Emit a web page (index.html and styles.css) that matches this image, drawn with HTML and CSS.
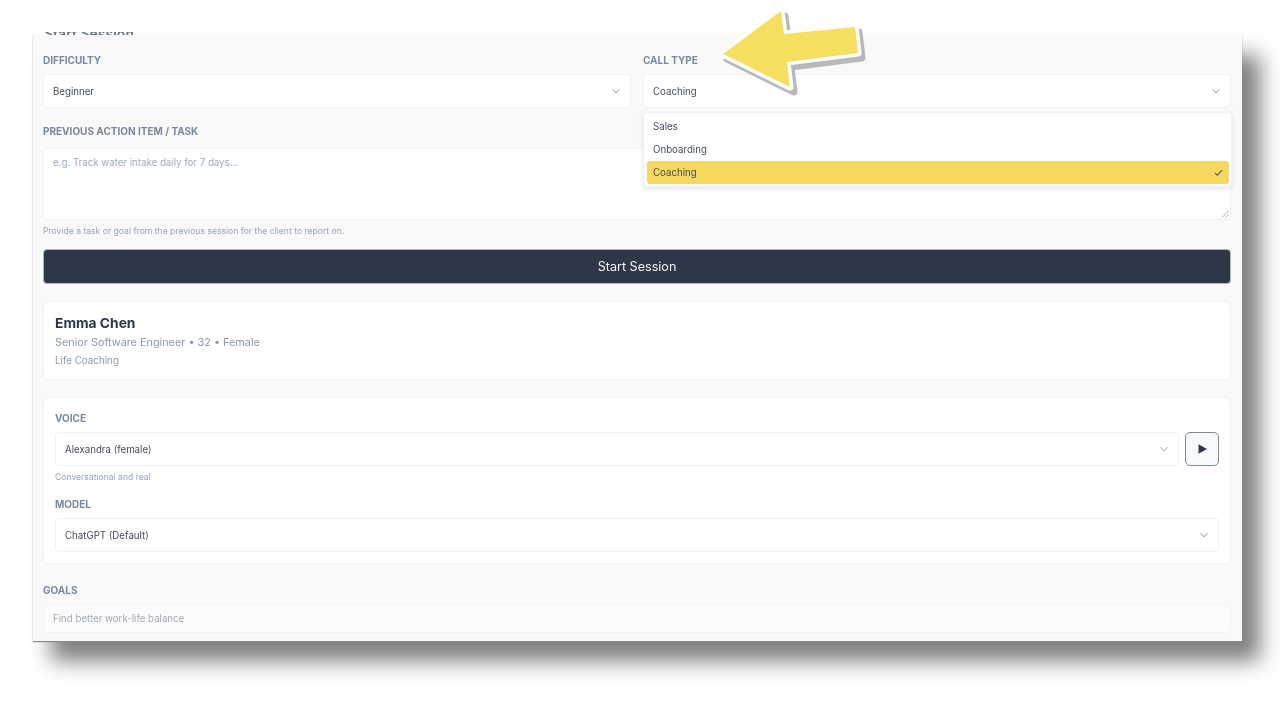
FILE: index.html
```html
<!DOCTYPE html>
<html lang="en">

<head>
    <meta charset="UTF-8">
    <meta name="viewport" content="width=device-width, initial-scale=1.0">
    <title>Start Session</title>
    <link rel="stylesheet" href="styles.css">
</head>

<body>
    <div class="shot">
        <div class="title-strip">
            <h2>Start Session</h2>
        </div>

        <div class="panel">
            <div class="row-two">
                <div class="field">
                    <div class="label">DIFFICULTY</div>
                    <div class="select">
                        <span>Beginner</span>
                        <svg class="chevron" viewBox="0 0 16 16"><path d="M4 6l4 4 4-4"/></svg>
                    </div>
                </div>
                <div class="field call-type">
                    <div class="label">CALL TYPE</div>
                    <div class="select">
                        <span>Coaching</span>
                        <svg class="chevron" viewBox="0 0 16 16"><path d="M4 6l4 4 4-4"/></svg>
                    </div>
                    <!-- open dropdown sits over the textarea -->
                    <div class="menu">
                        <div class="menu-item">Sales</div>
                        <div class="menu-item">Onboarding</div>
                        <div class="menu-item active">
                            <span>Coaching</span>
                            <svg class="check" viewBox="0 0 16 16"><path d="M3.5 8.5l3 3 6-6.5"/></svg>
                        </div>
                    </div>
                </div>
            </div>

            <div class="label task-label">PREVIOUS ACTION ITEM / TASK</div>
            <div class="textarea">
                <span>e.g. Track water intake daily for 7 days...</span>
                <svg class="resize" viewBox="0 0 8 8"><path d="M1 7.5L7.5 1M4.5 7.5L7.5 4.5"/></svg>
            </div>
            <div class="hint task-hint">Provide a task or goal from the previous session for the client to report on.</div>

            <button class="start-btn">Start Session</button>

            <div class="card client">
                <div class="client-name">Emma Chen</div>
                <div class="client-meta">Senior Software Engineer • 32 • Female</div>
                <div class="client-type">Life Coaching</div>
            </div>

            <div class="card voice">
                <div class="label">VOICE</div>
                <div class="voice-row">
                    <div class="select">
                        <span>Alexandra (female)</span>
                        <svg class="chevron" viewBox="0 0 16 16"><path d="M4 6l4 4 4-4"/></svg>
                    </div>
                    <button class="play-btn">
                        <svg viewBox="0 0 12 12"><path d="M2.5 1.2L11 6l-8.5 4.8z"/></svg>
                    </button>
                </div>
                <div class="hint voice-hint">Conversational and real</div>
                <div class="label model-label">MODEL</div>
                <div class="select">
                    <span>ChatGPT (Default)</span>
                    <svg class="chevron" viewBox="0 0 16 16"><path d="M4 6l4 4 4-4"/></svg>
                </div>
            </div>

            <div class="label goals-label">GOALS</div>
            <div class="goals-input">Find better work-life balance</div>
        </div>
    </div>

    <!-- annotation arrow drawn on top of the screenshot -->
    <svg class="arrow" viewBox="0 0 160 100">
        <path class="arrow-shadow" d="M64 6L67 29L138 22L141 48L70 57L73 82L6 49z"/>
        <path class="arrow-edge" d="M60 1L63 24L134 17L137 43L66 52L69 77L2 44z"/>
        <path class="arrow-fill" d="M60 1L63 24L134 17L137 43L66 52L69 77L2 44z"/>
    </svg>
</body>

</html>
```

FILE: styles.css
```css
* {
    margin: 0;
    padding: 0;
    box-sizing: border-box;
}

body {
    font-family: Inter, 'Liberation Sans', sans-serif;
    background: white;
    color: #2d3748;
    height: 720px;
    overflow: hidden;
}

/* the source is a soft, scaled-up capture */
.shot {
    width: 1209px;
    margin: 32px 0 0 33px;
    filter: blur(0.4px);
}

.title-strip {
    height: 3px;
    padding-left: 11px;
    overflow: hidden;
}

.title-strip h2 {
    font-size: 14px;
    line-height: 12px;
    font-weight: 600;
    margin-top: -4px;
    color: #6b7482;
}

.panel {
    height: 606px;
    padding: 19px 11px 0 10px;
    background: #f9f9f9;
    overflow: hidden;
    box-shadow: 0 1px 1px #888, 18px 20px 20px rgba(0, 0, 0, 0.5);
}

.row-two {
    display: grid;
    grid-template-columns: 1fr 1fr;
    gap: 12px;
}

.field {
    position: relative;
}

.label {
    font-size: 10px;
    line-height: 12px;
    font-weight: 700;
    color: #7a889e;
    margin-bottom: 8px;
}

.select {
    height: 34px;
    flex: 1;
    display: flex;
    align-items: center;
    justify-content: space-between;
    padding: 0 7px 0 9px;
    background: white;
    border: 1px solid #edf2f7;
    border-radius: 4px;
    font-size: 9.7px;
    color: #454c59;
}

.chevron {
    width: 14px;
    height: 14px;
    fill: none;
    stroke: #a0a8b4;
    stroke-width: 1.2;
}

.menu {
    position: absolute;
    top: 58px;
    left: 0;
    right: -1px;
    height: 75px;
    padding: 2px 2px 0 3px;
    background: white;
    border: 1px solid #edf2f7;
    border-radius: 4px;
    box-shadow: 0 2px 5px rgba(0, 0, 0, 0.1);
    z-index: 2;
}

.menu-item {
    height: 23px;
    display: flex;
    align-items: center;
    justify-content: space-between;
    padding: 0 4px 0 6px;
    font-size: 9.7px;
    color: #454c59;
    border-radius: 3px;
}

.menu-item.active {
    background: #f6d860;
}

.check {
    width: 13px;
    height: 13px;
    fill: none;
    stroke: #4a5568;
    stroke-width: 1.3;
}

.task-label {
    margin-top: 17px;
    margin-bottom: 11px;
}

.textarea {
    position: relative;
    height: 72px;
    padding: 8px 9px;
    background: white;
    border: 1px solid #edf2f7;
    border-radius: 4px;
    font-size: 9.7px;
    line-height: 12px;
    color: #a0aec0;
}

.resize {
    position: absolute;
    right: 1px;
    bottom: 1px;
    width: 8px;
    height: 8px;
    fill: none;
    stroke: #999;
    stroke-width: 0.8;
}

.hint {
    font-size: 8.6px;
    line-height: 11px;
    color: #98a4b6;
}

.task-hint {
    margin-top: 6px;
}

.start-btn {
    display: block;
    width: 100%;
    height: 35px;
    margin-top: 12px;
    background: #2d3748;
    color: #f1f3f6;
    border: 1px solid #b4b8c0;
    border-radius: 4px;
    font-family: inherit;
    font-size: 12.6px;
}

.card {
    background: white;
    border: 1px solid #edf2f7;
    border-radius: 5px;
    padding: 0 11px;
}

.client {
    height: 79px;
    margin-top: 17px;
    padding-top: 13px;
}

.client-name {
    font-size: 13.8px;
    line-height: 17px;
    font-weight: 700;
    color: #2d3748;
}

.client-meta {
    font-size: 10.85px;
    line-height: 14px;
    margin-top: 3px;
    color: #8a98b0;
}

.client-type {
    font-size: 9.8px;
    line-height: 12px;
    margin-top: 6px;
    color: #8a98b0;
}

.voice {
    height: 167px;
    margin-top: 17px;
    padding-top: 14px;
}

.voice-row {
    display: flex;
    gap: 6px;
}

.play-btn {
    width: 34px;
    height: 34px;
    display: flex;
    align-items: center;
    justify-content: center;
    background: #f7fafc;
    border: 1px solid #7f8896;
    border-radius: 5px;
}

.play-btn svg {
    width: 12px;
    height: 12px;
    fill: #2d3748;
}

.voice-hint {
    margin-top: 6px;
}

.model-label {
    margin-top: 15px;
}

.goals-label {
    margin-top: 20px;
}

.goals-input {
    height: 29px;
    padding: 0 9px;
    line-height: 27px;
    background: #fbfbfb;
    border: 1px solid #f2f3f5;
    border-radius: 4px;
    font-size: 9.7px;
    color: #a4a9b3;
}

.arrow {
    position: absolute;
    top: 10px;
    left: 721px;
    width: 160px;
    height: 100px;
    overflow: visible;
}

.arrow-shadow {
    fill: #b9b9b9;
    stroke: #b9b9b9;
    stroke-width: 7;
    stroke-linejoin: round;
}

.arrow-edge {
    fill: white;
    stroke: white;
    stroke-width: 7;
    stroke-linejoin: round;
}

.arrow-fill {
    fill: #f6df60;
}
```
